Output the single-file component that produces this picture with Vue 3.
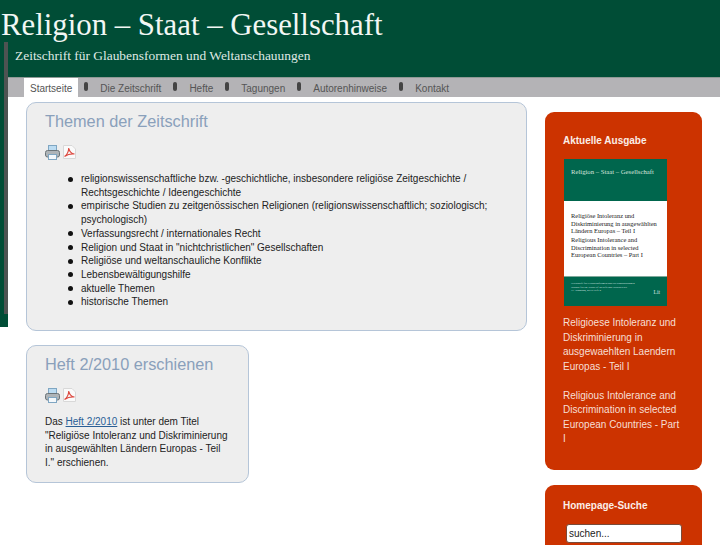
<template>
  <div class="page">
    <header class="head">
      <h1 class="title">Religion – Staat – Gesellschaft</h1>
      <p class="sub">Zeitschrift für Glaubensformen und Weltanschauungen</p>
    </header>
    <nav class="nav">
      <template v-for="(n, i) in nav" :key="n">
        <span v-if="i" class="sep"></span>
        <a class="item" :class="{ on: i === 0 }">{{ n }}</a>
      </template>
    </nav>
    <span class="sidebar-edge"></span>
    <div class="cols">
      <main class="main">
        <section class="card">
          <h2>Themen der Zeitschrift</h2>
          <div class="icons">
            <svg width="15" height="15" viewBox="0 0 15 15"><rect x="3.500" y=".5" width="8" height="6" fill="#bcdcf2" stroke="#7fa6c2"/><rect x=".5" y="5.500" width="14" height="6.500" rx="2" fill="#aeb4b8" stroke="#6b7479"/><rect x="3.500" y="9.500" width="8" height="5" fill="#f4f8fb" stroke="#7fa6c2"/></svg>
            <svg width="13" height="14" viewBox="0 0 13 14"><path d="M.5.5h8.500l3.500 3.500v9.500H.5z" fill="#fafafa" stroke="#d8d8d8"/><path d="M1.500 11.500c3-2 4-4.500 4.300-8.500.5 3.500 2 5.500 5.700 6-3-.3-7 .5-10 2.500z" fill="none" stroke="#dc4a40" stroke-width="1.200"/></svg>
          </div>
          <ul>
            <li v-for="t in topics" :key="t">{{ t }}</li>
          </ul>
        </section>
        <section class="card small">
          <h2>Heft 2/2010 erschienen</h2>
          <div class="icons">
            <svg width="15" height="15" viewBox="0 0 15 15"><rect x="3.500" y=".5" width="8" height="6" fill="#bcdcf2" stroke="#7fa6c2"/><rect x=".5" y="5.500" width="14" height="6.500" rx="2" fill="#aeb4b8" stroke="#6b7479"/><rect x="3.500" y="9.500" width="8" height="5" fill="#f4f8fb" stroke="#7fa6c2"/></svg>
            <svg width="13" height="14" viewBox="0 0 13 14"><path d="M.5.5h8.500l3.500 3.500v9.500H.5z" fill="#fafafa" stroke="#d8d8d8"/><path d="M1.500 11.500c3-2 4-4.500 4.300-8.500.5 3.500 2 5.500 5.700 6-3-.3-7 .5-10 2.500z" fill="none" stroke="#dc4a40" stroke-width="1.200"/></svg>
          </div>
          <p>Das <a class="link">Heft 2/2010</a> ist unter dem Titel "Religiöse Intoleranz und Diskriminierung in ausgewählten Ländern Europas - Teil I." erschienen.</p>
        </section>
      </main>
      <aside class="side">
        <section class="box">
          <h3>Aktuelle Ausgabe</h3>
          <div class="cover">
            <div class="c-top">Religion – Staat – Gesellschaft</div>
            <div class="c-mid">
              <p>Religiöse Intoleranz und<br>Diskriminierung in ausgewählten<br>Ländern Europas – Teil I</p>
              <p>Religious Intolerance and<br>Discrimination in selected<br>European Countries – Part I</p>
            </div>
            <div class="c-bot">
              <div>Zeitschrift für Glaubensformen und Weltanschauungen<br>Journal for the Study of Beliefs and Worldviews<br>11. Jahrgang, 2010 Heft 2</div>
              <b>Lit</b>
            </div>
          </div>
          <p class="desc">Religioese Intoleranz und Diskriminierung in ausgewaehlten Laendern Europas - Teil I<br><br>Religious Intolerance and Discrimination in selected European Countries - Part I</p>
        </section>
        <section class="box search">
          <h3>Homepage-Suche</h3>
          <input class="input" value="suchen..." />
        </section>
      </aside>
    </div>
  </div>
</template>

<script setup>
const nav = ['Startseite', 'Die Zeitschrift', 'Hefte', 'Tagungen', 'Autorenhinweise', 'Kontakt']
const topics = [
  'religionswissenschaftliche bzw. -geschichtliche, insbesondere religiöse Zeitgeschichte / Rechtsgeschichte / Ideengeschichte',
  'empirische Studien zu zeitgenössischen Religionen (religionswissenschaftlich; soziologisch; psychologisch)',
  'Verfassungsrecht / internationales Recht',
  'Religion und Staat in "nichtchristlichen" Gesellschaften',
  'Religiöse und weltanschauliche Konflikte',
  'Lebensbewältigungshilfe',
  'aktuelle Themen',
  'historische Themen'
]
</script>

<style>
html, body { margin: 0; height: 545px; overflow: hidden; background: #fff; }
</style>

<style scoped>
.page { position: relative; width: 720px; height: 545px; overflow: hidden; font-family: "Liberation Sans", Arial, sans-serif; font-size: 10px; color: #222; }
.head { height: 77px; background: #004d36; color: #f2f7f4; font-family: "Liberation Serif", serif; box-sizing: border-box; padding-top: 8px; }
.title { margin: 0 0 0 1px; font-weight: 400; font-size: 30.800px; line-height: 35px; }
.sub { margin: 5px 0 0 15px; font-size: 13.430px; line-height: 16px; color: #dfe9e4; }
.nav { height: 19px; background: #b4b3b6; border-top: 1px solid #8f9a96; display: flex; align-items: stretch; padding-left: 24px; color: #555; }
.item { display: block; line-height: 21px; padding: 0 6px; }
.item.on { background: #fff; }
.sep { width: 4.500px; height: 9px; margin: 4px 6px 0 5.500px; background: #444; border-radius: 2.250px; }
.sidebar-edge { position: absolute; left: 0; top: 42px; width: 8px; height: 285px; background: #004d36; }
.sidebar-edge::after { content: ""; position: absolute; left: 4px; top: 0; width: 4px; height: 272px; background: #4e5352; }
.cols { display: flex; align-items: flex-start; padding-left: 26px; }
.main { width: 501px; padding-top: 5px; position: relative; z-index: 1; }
.card { background: #eee; border: 1px solid #b5c5d8; border-radius: 10px; padding: 0 18px 21px; margin-bottom: 14px; }
.card.small { width: 185px; padding-bottom: 12px; margin-bottom: 0; }
h2 { margin: 0; padding-top: 9px; font-weight: 400; font-size: 16.300px; line-height: 19px; color: #8aa0bb; }
.icons { display: flex; gap: 3px; margin-top: 14px; height: 15px; align-items: flex-start; }
ul { margin: 12px 0 0; padding: 0 0 0 36px; list-style: none; }
li { line-height: 13.700px; position: relative; }
li::before { content: ""; position: absolute; left: -13px; top: 4.500px; width: 5px; height: 5px; border-radius: 50%; background: #111; }
.card p { margin: 12px 0 0; line-height: 13.700px; }
.link { color: #2a5f96; text-decoration: underline; }
.side { margin-left: 18px; width: 157px; padding-top: 15px; }
.box { box-sizing: border-box; background: #cc3300; border-radius: 9px; padding: 22px 20px 23px 18px; color: #f7dfd4; margin-bottom: 15px; }
.box h3 { margin: 0; font-size: 10px; line-height: 14px; color: #fbeee8; font-weight: 700; }
.cover { width: 103px; height: 147px; margin: 11px 0 0 1px; display: flex; flex-direction: column; font-family: "Liberation Serif", serif; color: #222; background: #fff; }
.c-top { height: 42px; background: #00664d; color: #d6e4de; font-size: 6.700px; line-height: 8px; padding: 9px 0 0 7px; box-sizing: border-box; }
.c-mid { flex: 1; padding: 11px 0 0 7px; font-size: 6.450px; line-height: 7.600px; }
.c-mid p { margin: 0 0 1.200px; }
.c-bot { height: 30px; background: #00664d; border-top: 1px solid #7fa99b; color: #dce8e3; font-size: 2.900px; line-height: 3.700px; padding: 5px 7px 0; box-sizing: border-box; display: flex; justify-content: space-between; }
.c-bot b { font-weight: 400; font-size: 5.500px; line-height: 6px; margin-top: 7px; }
.desc { margin: 10px 0 0; line-height: 14.500px; }
.search { padding-top: 14px; padding-bottom: 0; height: 80px; margin: 0; }
.input { display: block; box-sizing: border-box; margin: 11px 0 0 3px; width: 116px; height: 19px; padding: 0 2px; background: #fff; border: 1px solid #7a4a38; border-radius: 3px; font-family: "Liberation Sans", sans-serif; font-size: 10px; color: #222; }
</style>
